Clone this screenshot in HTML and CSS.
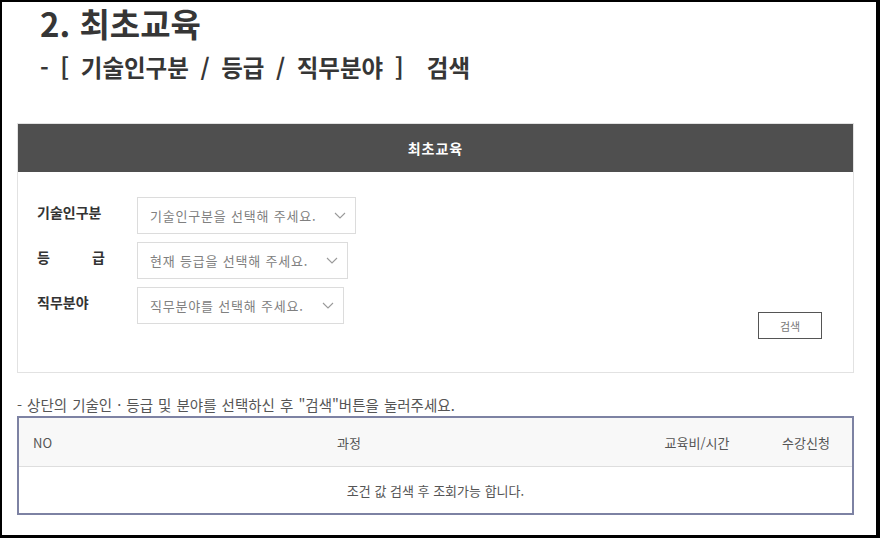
FILE: index.html
```html
<!DOCTYPE html>
<html lang="ko">
<head>
    <meta charset="utf-8">
    <title>최초교육</title>
    <link rel="stylesheet" href="styles.css">
</head>
<body>
    <div class="frame">
        <h1 class="title">2. 최초교육</h1>
        <h2 class="subtitle">- [ 기술인구분 / 등급 / 직무분야 ]&nbsp; 검색</h2>

        <!-- search panel -->
        <div class="panel">
            <div class="panel-head">최초교육</div>
            <div class="panel-body">
                <div class="form">
                    <div class="form-row">
                        <span class="label">기술인구분</span>
                        <div class="select">
                            <span>기술인구분을 선택해 주세요.</span>
                            <svg class="chev" width="12" height="7" viewBox="0 0 12 7"><path d="M1 1l5 5 5-5" fill="none" stroke="#9a9a9a" stroke-width="1.1"/></svg>
                        </div>
                    </div>
                    <div class="form-row">
                        <span class="label">등 급</span>
                        <div class="select">
                            <span>현재 등급을 선택해 주세요.</span>
                            <svg class="chev" width="12" height="7" viewBox="0 0 12 7"><path d="M1 1l5 5 5-5" fill="none" stroke="#9a9a9a" stroke-width="1.1"/></svg>
                        </div>
                    </div>
                    <div class="form-row">
                        <span class="label">직무분야</span>
                        <div class="select">
                            <span>직무분야를 선택해 주세요.</span>
                            <svg class="chev" width="12" height="7" viewBox="0 0 12 7"><path d="M1 1l5 5 5-5" fill="none" stroke="#9a9a9a" stroke-width="1.1"/></svg>
                        </div>
                    </div>
                </div>
                <button class="btn">검색</button>
            </div>
        </div>

        <p class="note">- 상단의 기술인 · 등급 및 분야를 선택하신 후 "검색"버튼을 눌러주세요.</p>

        <!-- result table -->
        <div class="table">
            <div class="row head">
                <div class="cell no">NO</div>
                <div class="cell">과정</div>
                <div class="cell">교육비/시간</div>
                <div class="cell">수강신청</div>
            </div>
            <div class="empty">조건 값 검색 후 조회가능 합니다.</div>
        </div>
    </div>
</body>
</html>
```

FILE: styles.css
```css
* { box-sizing: border-box; }
html, body { margin: 0; background: #fff; }
body { font-family: "Noto Sans CJK KR", "Noto Sans", sans-serif; color: #333; }

.frame {
    width: 880px; height: 538px;
    border-style: solid; border-color: #000;
    border-width: 2px 4px 3px 2px;
    padding: 0 22px 0 15px;
    overflow: hidden;
}

.title { margin: 0 0 0 23px; font-size: 33px; line-height: 42px; font-weight: 700; color: #363636; }
.subtitle { margin: 6px 0 0 23px; font-size: 23.5px; line-height: 34px; font-weight: 700; color: #363636; word-spacing: 5px; }

.panel { margin-top: 39px; border: 1px solid #e2e2e2; }
.panel-head { height: 48px; background: #4f4f4f; color: #fff; font-size: 14px; font-weight: 700; letter-spacing: 1px; display: flex; align-items: center; justify-content: center; }
.panel-body { display: flex; justify-content: space-between; align-items: flex-end; padding: 25px 31px 33px 19px; }

.form { display: flex; flex-direction: column; gap: 8px; margin-bottom: 15px; }
.form-row { display: flex; align-items: flex-start; }
.label { width: 68px; margin-right: 32px; font-size: 14px; font-weight: 700; line-height: 30px; color: #333; text-align: justify; text-align-last: justify; }
.select { display: inline-flex; align-items: center; gap: 18px; height: 37px; padding: 0 9px 0 12px; border: 1px solid #dcdcdc; font-size: 13px; letter-spacing: 0.8px; color: #808080; }
.chev { display: block; }

.btn { width: 64px; height: 27px; background: #fff; border: 1px solid #555; font-family: inherit; font-size: 11px; color: #777; padding: 0; }

.note { margin: 22px 0 0; font-size: 14.5px; line-height: 20px; color: #555; word-spacing: 1px; }

.table { margin-top: 1px; border: 2px solid #7d82a3; }
.row { display: grid; grid-template-columns: 45px 1fr 126px 92px; }
.head { height: 49px; background: #f8f8f8; border-bottom: 1px solid #dedede; }
.cell { display: flex; align-items: center; justify-content: center; font-size: 13px; color: #555; }
.cell.no { justify-content: flex-start; padding-left: 14px; }
.empty { height: 46px; display: flex; align-items: center; justify-content: center; font-size: 13px; color: #555; }
```
